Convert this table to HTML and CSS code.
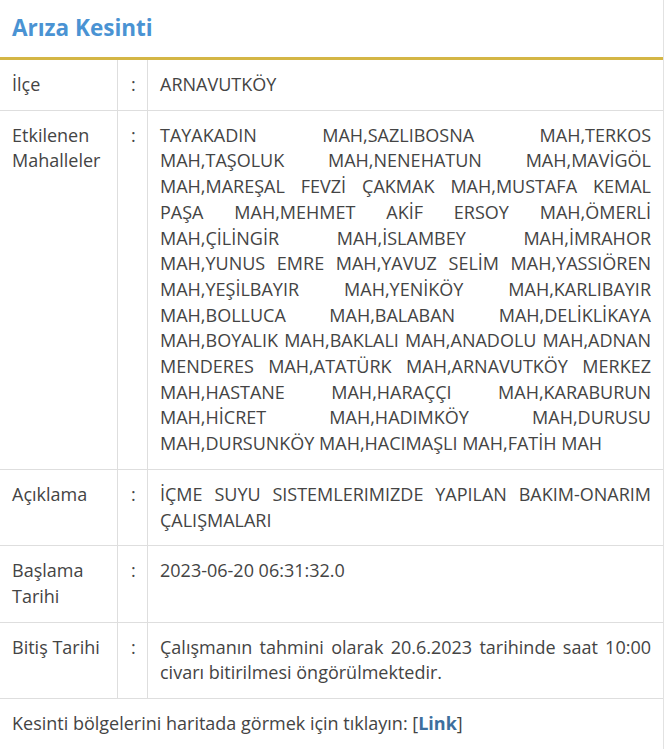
FILE: index.html
```html
<!DOCTYPE html>
<html lang="tr">
<head>
<meta charset="utf-8">
<link rel="stylesheet" href="styles.css">
</head>
<body>
<div class="panel">
  <h1 class="title">Arıza Kesinti</h1>
  <table class="info">
    <tr><td class="lbl">İlçe</td><td class="sep">:</td><td class="val">ARNAVUTKÖY</td></tr>
    <tr><td class="lbl">Etkilenen Mahalleler</td><td class="sep">:</td><td class="val just">TAYAKADIN MAH,SAZLIBOSNA MAH,TERKOS MAH,TAŞOLUK MAH,NENEHATUN MAH,MAVİGÖL MAH,MAREŞAL FEVZİ ÇAKMAK MAH,MUSTAFA KEMAL PAŞA MAH,MEHMET AKİF ERSOY MAH,ÖMERLİ MAH,ÇİLİNGİR MAH,İSLAMBEY MAH,İMRAHOR MAH,YUNUS EMRE MAH,YAVUZ SELİM MAH,YASSIÖREN MAH,YEŞİLBAYIR MAH,YENİKÖY MAH,KARLIBAYIR MAH,BOLLUCA MAH,BALABAN MAH,DELİKLİKAYA MAH,BOYALIK MAH,BAKLALI MAH,ANADOLU MAH,ADNAN MENDERES MAH,ATATÜRK MAH,ARNAVUTKÖY MERKEZ MAH,HASTANE MAH,HARAÇÇI MAH,KARABURUN MAH,HİCRET MAH,HADIMKÖY MAH,DURUSU MAH,DURSUNKÖY MAH,HACIMAŞLI MAH,FATİH MAH</td></tr>
    <tr><td class="lbl">Açıklama</td><td class="sep">:</td><td class="val just">İÇME SUYU SISTEMLERIMIZDE YAPILAN BAKIM-ONARIM ÇALIŞMALARI</td></tr>
    <tr><td class="lbl">Başlama Tarihi</td><td class="sep">:</td><td class="val">2023-06-20 06:31:32.0</td></tr>
    <tr><td class="lbl">Bitiş Tarihi</td><td class="sep">:</td><td class="val just">Çalışmanın tahmini olarak 20.6.2023 tarihinde saat 10:00 civarı bitirilmesi öngörülmektedir.</td></tr>
  </table>
  <p class="note">Kesinti bölgelerini haritada görmek için tıklayın: [<a class="link" href="#">Link</a>]</p>
</div>
</body>
</html>
```
FILE: styles.css
```css
html, body {
  margin: 0;
  padding: 0;
  background: #fff;
}
body {
  font-family: "Open Sans", "Noto Sans", sans-serif;
  color: #444;
  font-size: 18px;
}
.panel {
  width: 663px;
  border-right: 1px solid #e2e2e2;
  min-height: 749px;
}
.title {
  margin: 0;
  height: 60px;
  box-sizing: border-box;
  padding: 12px 12px 0;
  font-size: 22.5px;
  line-height: 32px;
  font-weight: 700;
  color: #4a93d3;
  border-bottom: 3px solid #d4b645;
}
.info {
  width: 100%;
  border-collapse: collapse;
}
.info td {
  border-bottom: 1px solid #dedede;
  vertical-align: top;
  padding: 12px 12px 12px;
  line-height: 25.7px;
}
.lbl {
  width: 93px;
  border-right: 1px solid #dedede;
}
.sep {
  width: 6px;
  padding-left: 13px !important;
  padding-right: 10px !important;
  border-right: 1px solid #dedede;
}
.val {
  padding-left: 12px !important;
}
.just {
  text-align: justify;
}
.note {
  margin: 0;
  padding: 12px 12px;
  line-height: 25.7px;
}
.link {
  color: #3d6f9e;
  font-weight: 700;
  text-decoration: none;
}
```
